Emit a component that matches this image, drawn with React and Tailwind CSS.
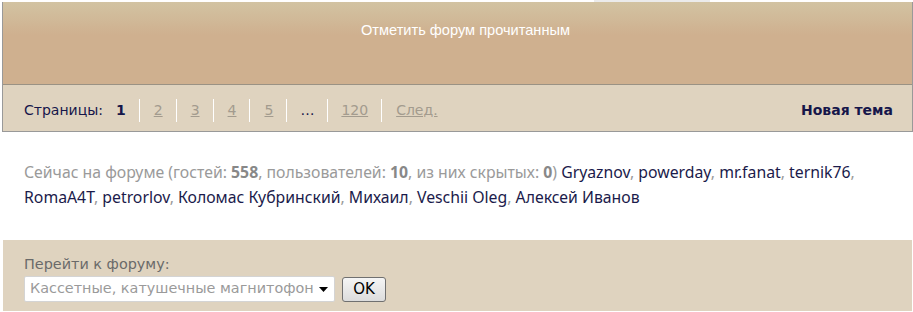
import React from 'react';

const pages = ['2', '3', '4', '5'];

const online = ['Gryaznov', 'powerday', 'mr.fanat', 'ternik76', 'RomaA4T', 'petrorlov', 'Коломас Кубринский', 'Михаил', 'Veschii Oleg', 'Алексей Иванов'];

const App = () => {
  return (
    <div className="w-[913px] h-[312px] overflow-hidden bg-white">
      {/* edge of the block above */}
      <div className="h-[2px] flex">
        <div className="ml-[594px] w-[116px] bg-[#ebebeb]" />
      </div>

      <div className="ml-[2px] w-[911px] border-x border-b border-[#999]">
        {/* mark read */}
        <div className="h-[83px] pt-[15px] pl-[16px] text-center bg-[linear-gradient(to_bottom,#d2c3a2,#cfb08f_40%,#cfb08f)] border-b border-[#9a9284]">
          <span className="text-white text-[14.6px] font-['Liberation_Sans',Arial,sans-serif]">Отметить форум прочитанным</span>
        </div>

        {/* pagination */}
        <div className="h-[46px] pt-[4px] bg-[#dfd3bf] flex items-center justify-between pl-[21px] pr-[19px] font-['DejaVu_Sans',Verdana,sans-serif] text-[14px] text-[#16164a]">
          <div className="flex items-center">
            <span>Страницы:</span>
            <span className="px-[13px] font-bold">1</span>
            {pages.map((p) => (
              <span key={p} className="border-l border-white pl-[14px] pr-[13px] h-[23px] flex items-center">
                <a className="text-[#a39b8e] underline">{p}</a>
              </span>
            ))}
            <span className="border-l border-white px-[13px] h-[23px] flex items-center">…</span>
            <span className="border-l border-white px-[13px] h-[23px] flex items-center">
              <a className="text-[#a39b8e] underline">120</a>
            </span>
            <span className="border-l border-white px-[14px] h-[23px] flex items-center">
              <a className="text-[#a39b8e] underline">След.</a>
            </span>
          </div>
          <a className="font-bold">Новая тема</a>
        </div>
      </div>

      {/* who is online */}
      <div className="pt-[28px] pl-[24px] pr-[30px] h-[108px] text-[15.8px] leading-[25px] font-['Noto_Sans','Open_Sans',sans-serif] text-[#9a9a9a]">
        Сейчас на форуме (гостей: <b className="text-[#888]">558</b>, пользователей: <b className="text-[#888]">10</b>, из них скрытых: <b className="text-[#888]">0</b>){' '}
        {online.map((name, i) => (
          <React.Fragment key={name}>
            <a className="text-[#1b1b4b]">{name}</a>
            {i < online.length - 1 && ', '}
          </React.Fragment>
        ))}
      </div>

      {/* jump to forum */}
      <div className="ml-[3px] w-[909px] h-[71px] bg-[#dfd3bf] pl-[21px] pt-[14px] font-['DejaVu_Sans',Verdana,sans-serif]">
        <div className="text-[14.4px] leading-[20px] text-[#6a6a6a]">Перейти к форуму:</div>
        <div className="flex items-center gap-[7px] mt-[2px]">
          <div className="w-[311px] h-[26px] bg-white border border-[#d4d4d4] rounded-[2px] flex items-center pl-[5px] pr-[6px]">
            <span className="flex-1 overflow-hidden whitespace-nowrap text-[14.4px] text-[#9a9a9a]">Кассетные, катушечные магнитофоны</span>
            <svg width="9" height="5" viewBox="0 0 9 5" className="ml-[6px]">
              <polygon points="0,0 9,0 4.5,5" fill="#000" />
            </svg>
          </div>
          <button className="w-[44px] h-[25px] border border-[#707070] rounded-[3px] bg-[linear-gradient(to_bottom,#f5f5f5,#dcdcdc)] text-[15px] text-black leading-none">OK</button>
        </div>
      </div>
    </div>
  );
};

export default App;
